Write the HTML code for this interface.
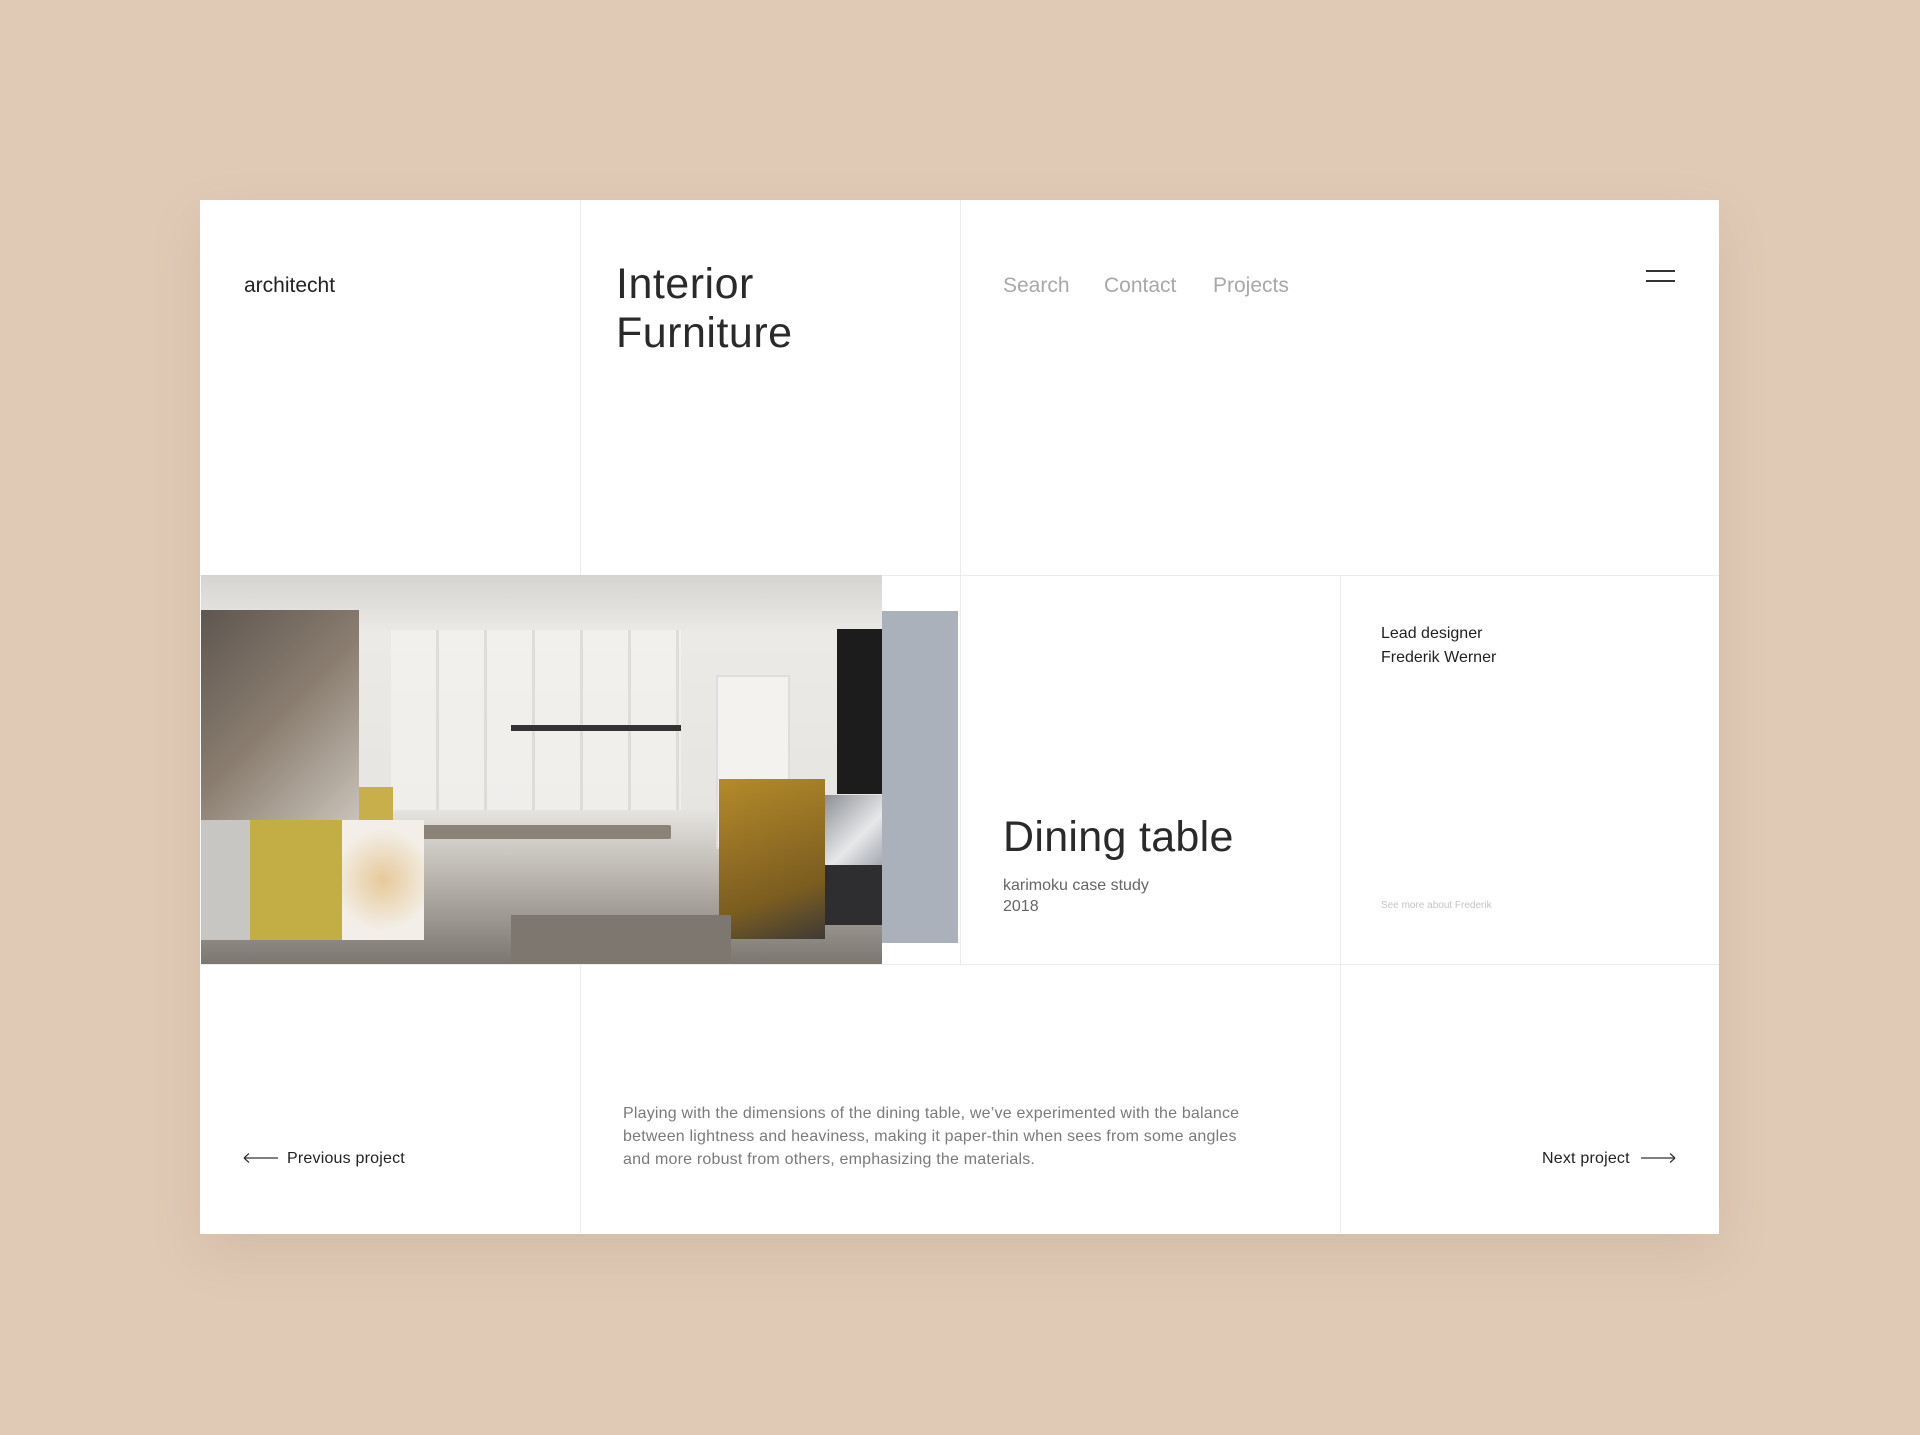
<!DOCTYPE html>
<html><head><meta charset="utf-8"><style>
body{margin:0;width:1920px;height:1435px;background:#e0cab6;font-family:"Liberation Sans",sans-serif;position:relative;overflow:hidden}
.card{position:absolute;left:200px;top:200px;width:1519px;height:1034px;background:#fff;box-shadow:0 20px 50px rgba(120,90,60,.12)}
.l{position:absolute;background:#ececec}
.t{position:absolute;white-space:nowrap}
.b{position:absolute}
</style></head><body>
<div class="card"></div>
<div class="l" style="left:580px;top:200px;width:1px;height:375px"></div>
<div class="l" style="left:960px;top:200px;width:1px;height:764px"></div>
<div class="l" style="left:1340px;top:575px;width:1px;height:659px"></div>
<div class="l" style="left:580px;top:964px;width:1px;height:270px"></div>
<div class="l" style="left:200px;top:575px;width:1519px;height:1px"></div>
<div class="l" style="left:200px;top:964px;width:1519px;height:1px"></div>

<div class="t" style="left:244px;top:274px;font-size:21px;color:#222">architecht</div>
<div class="t" style="left:616px;top:260px;font-size:43px;line-height:49px;color:#2a2a2a;letter-spacing:.5px">Interior<br>Furniture</div>
<div class="t" style="left:1003px;top:274px;font-size:21px;color:#a8a8a8">Search</div>
<div class="t" style="left:1104px;top:274px;font-size:21px;color:#a8a8a8">Contact</div>
<div class="t" style="left:1213px;top:274px;font-size:21px;color:#a8a8a8">Projects</div>
<div class="b" style="left:1646px;top:270px;width:29px;height:1.5px;background:#333"></div>
<div class="b" style="left:1646px;top:280px;width:29px;height:1.5px;background:#333"></div>

<div class="b" style="left:882px;top:611px;width:76px;height:332px;background:#aab1ba"></div>
<div class="b" style="left:201px;top:575px;width:681px;height:389px;background:linear-gradient(180deg,#d6d4d0 0%,#eceae6 15%,#e7e5e1 60%,#b9b5ae 78%,#7b7770 100%);overflow:hidden">
 <div class="b" style="left:190px;top:55px;width:290px;height:180px;background:repeating-linear-gradient(90deg,#f2f1ee 0 45px,#dcdad5 45px 48px);opacity:.8"></div>
 <div class="b" style="left:515px;top:100px;width:70px;height:170px;background:#f3f2ef;border:2px solid #ddd"></div>
 <div class="b" style="left:636px;top:54px;width:45px;height:165px;background:#1c1c1c"></div>
 <div class="b" style="left:310px;top:150px;width:170px;height:6px;background:#333"></div>
 <div class="b" style="left:220px;top:250px;width:250px;height:14px;background:#8b8278;border-radius:2px"></div>
 <div class="b" style="left:0;top:35px;width:158px;height:210px;background:linear-gradient(135deg,#5e5650,#8a7d70 50%,#c9c2b8)"></div>
 <div class="b" style="left:0;top:245px;width:158px;height:120px;background:#c8c6c2"></div>
 <div class="b" style="left:49px;top:245px;width:92px;height:120px;background:#c3ad45"></div>
 <div class="b" style="left:158px;top:212px;width:34px;height:33px;background:#c9af4c"></div>
 <div class="b" style="left:141px;top:245px;width:82px;height:120px;background:radial-gradient(circle at 50% 50%,#e6c99a,#f3efe8 70%)"></div>
 <div class="b" style="left:518px;top:204px;width:106px;height:160px;background:linear-gradient(160deg,#b58a2a,#7b5d20 70%,#3e3a36)"></div>
 <div class="b" style="left:624px;top:220px;width:57px;height:70px;background:linear-gradient(135deg,#8d9095,#e6e8ea 60%,#a5a8ad)"></div>
 <div class="b" style="left:624px;top:290px;width:57px;height:60px;background:#2e2e30"></div>
 <div class="b" style="left:310px;top:340px;width:220px;height:49px;background:#7d7770"></div>
</div>

<div class="t" style="left:1003px;top:813px;font-size:43px;color:#2a2a2a;letter-spacing:.3px">Dining table</div>
<div class="t" style="left:1003px;top:875px;font-size:16px;line-height:21px;color:#666">karimoku case study<br>2018</div>
<div class="t" style="left:1381px;top:622px;font-size:16px;line-height:24px;color:#222">Lead designer<br>Frederik Werner</div>
<div class="t" style="left:1381px;top:900px;font-size:10px;color:#c4c4c4">See more about Frederik</div>

<div class="t" style="left:623px;top:1102px;font-size:16px;line-height:23px;color:#7a7a7a;letter-spacing:.2px">Playing with the dimensions of the dining table, we’ve experimented with the balance<br>between lightness and heaviness, making it paper-thin when sees from some angles<br>and more robust from others, emphasizing the materials.</div>

<svg class="b" style="left:243px;top:1152px" width="36" height="12"><path d="M1 6H35M1 6L6 1.5M1 6L6 10.5" stroke="#333" stroke-width="1.2" fill="none"/></svg>
<div class="t" style="left:287px;top:1150px;font-size:16px;color:#222;letter-spacing:.2px">Previous project</div>
<div class="t" style="left:1542px;top:1150px;font-size:16px;color:#222;letter-spacing:.2px">Next project</div>
<svg class="b" style="left:1641px;top:1152px" width="36" height="12"><path d="M0 6H34M34 6L29 1.5M34 6L29 10.5" stroke="#333" stroke-width="1.2" fill="none"/></svg>
</body></html>
